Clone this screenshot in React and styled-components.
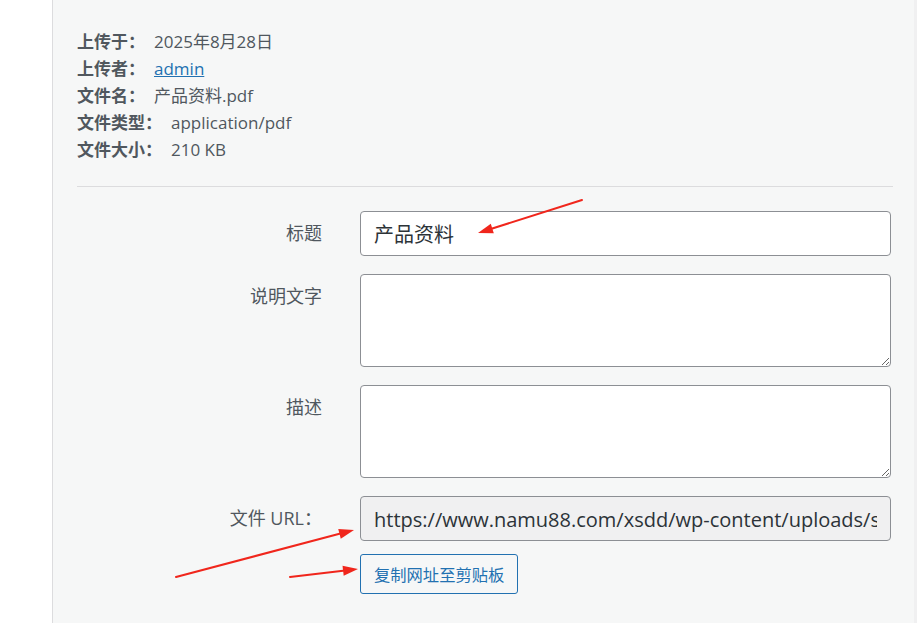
import React from 'react'
import styled, { createGlobalStyle } from 'styled-components'

const GlobalStyle = createGlobalStyle`
  html, body {
    margin: 0;
    padding: 0;
    background: #fff;
  }
  body {
    font-family: "Open Sans", "Noto Sans CJK SC", sans-serif;
    color: #50575e;
  }
  * {
    box-sizing: border-box;
  }
`

const meta = [
  { label: '上传于：', value: '2025年8月28日' },
  { label: '上传者：', value: 'admin', link: true },
  { label: '文件名：', value: '产品资料.pdf' },
  { label: '文件类型：', value: 'application/pdf' },
  { label: '文件大小：', value: '210 KB' },
]

// arrows drawn over the screenshot, [fromX, fromY, toX, toY]
const arrows = [
  [582, 200, 478, 233],
  [176, 577, 354, 530],
  [290, 577, 358, 569],
]

const Arrow = ({ x1, y1, x2, y2 }) => {
  const angle = Math.atan2(y2 - y1, x2 - x1)
  const len = 15
  const half = 5
  const bx = x2 - len * Math.cos(angle)
  const by = y2 - len * Math.sin(angle)
  const px = -Math.sin(angle) * half
  const py = Math.cos(angle) * half
  const head = `${x2},${y2} ${bx + px},${by + py} ${bx - px},${by - py}`
  return <g>
    <line x1={x1} y1={y1} x2={bx} y2={by} stroke="#f0261c" strokeWidth="2" strokeLinecap="round" />
    <polygon points={head} fill="#f0261c" />
  </g>
}

const App = () => {
  return <Page>
    <GlobalStyle />
    <Gutter />
    <Panel>
      <Meta>
        {meta.map((item, i) => {
          return <MetaRow key={i}>
            <strong>{item.label}</strong>
            {item.link ? <a href="#">{item.value}</a> : item.value}
          </MetaRow>
        })}
      </Meta>
      <Divider />
      <Form onSubmit={(e) => e.preventDefault()}>
        <Label htmlFor="title">标题</Label>
        <TextInput id="title" type="text" defaultValue="产品资料" />

        <Label htmlFor="caption">说明文字</Label>
        <TextArea id="caption" />

        <Label htmlFor="desc">描述</Label>
        <TextArea id="desc" />

        <Label htmlFor="url">文件 URL：</Label>
        <UrlCell>
          <TextInput
            id="url"
            type="text"
            readOnly
            $readOnly
            value="https://www.namu88.com/xsdd/wp-content/uploads/sites/2/2025/08/产品资料.pdf"
          />
          <CopyButton type="button">复制网址至剪贴板</CopyButton>
        </UrlCell>
      </Form>
    </Panel>
    <Overlay width="917" height="623" viewBox="0 0 917 623">
      {arrows.map(([x1, y1, x2, y2], i) => <Arrow key={i} x1={x1} y1={y1} x2={x2} y2={y2} />)}
    </Overlay>
  </Page>
}

const Page = styled.div`
  position: relative;
  display: flex;
  min-height: 100vh;
  width: 917px;
`

const Gutter = styled.div`
  width: 52px;
  flex-shrink: 0;
  background: #fff;
`

const Panel = styled.section`
  flex: 1;
  background: #f6f7f7;
  border-left: 1px solid #dcdcde;
  border-right: 1px solid #1d2327;
  box-shadow: inset -3px 0 0 #f0f0f1;
  padding: 28px 24px 0 24px;
`

const Meta = styled.div`
  font-size: 17px;
  line-height: 27px;
  color: #50575e;
`

const MetaRow = styled.div`
  white-space: nowrap;
  strong {
    font-weight: 700;
    margin-right: 9px;
  }
  a {
    color: #2271b1;
    text-decoration: underline;
  }
`

const Divider = styled.hr`
  margin: 23px 0 24px;
  border: none;
  border-top: 1px solid #dcdcde;
  width: 816px;
`

const Form = styled.form`
  display: grid;
  grid-template-columns: 245px 531px;
  column-gap: 38px;
  row-gap: 18px;
  align-items: start;
`

const Label = styled.label`
  text-align: right;
  font-size: 18px;
  line-height: 24px;
  padding-top: 10px;
  color: #50575e;
`

const TextInput = styled.input`
  display: block;
  width: 100%;
  height: 45px;
  padding: 0 13px;
  font-family: inherit;
  font-size: 20px;
  color: #2c3338;
  background: ${(p) => (p.$readOnly ? '#f0f0f1' : '#fff')};
  border: 1px solid #8c8f94;
  border-radius: 4px;
  outline: none;
`

const TextArea = styled.textarea`
  display: block;
  width: 100%;
  height: 93px;
  padding: 8px 13px;
  font-family: inherit;
  font-size: 20px;
  color: #2c3338;
  background: #fff;
  border: 1px solid #8c8f94;
  border-radius: 4px;
  outline: none;
`

const UrlCell = styled.div`
  display: flex;
  flex-direction: column;
  align-items: flex-start;
  gap: 13px;
`

const CopyButton = styled.button`
  height: 40px;
  padding: 0 13px;
  font-family: "Noto Sans CJK SC", sans-serif;
  font-size: 16.3px;
  color: #2271b1;
  background: #f6f7f7;
  border: 1px solid #2271b1;
  border-radius: 3px;
  cursor: pointer;
`

const Overlay = styled.svg`
  position: absolute;
  top: 0;
  left: 0;
  pointer-events: none;
`

export default App
